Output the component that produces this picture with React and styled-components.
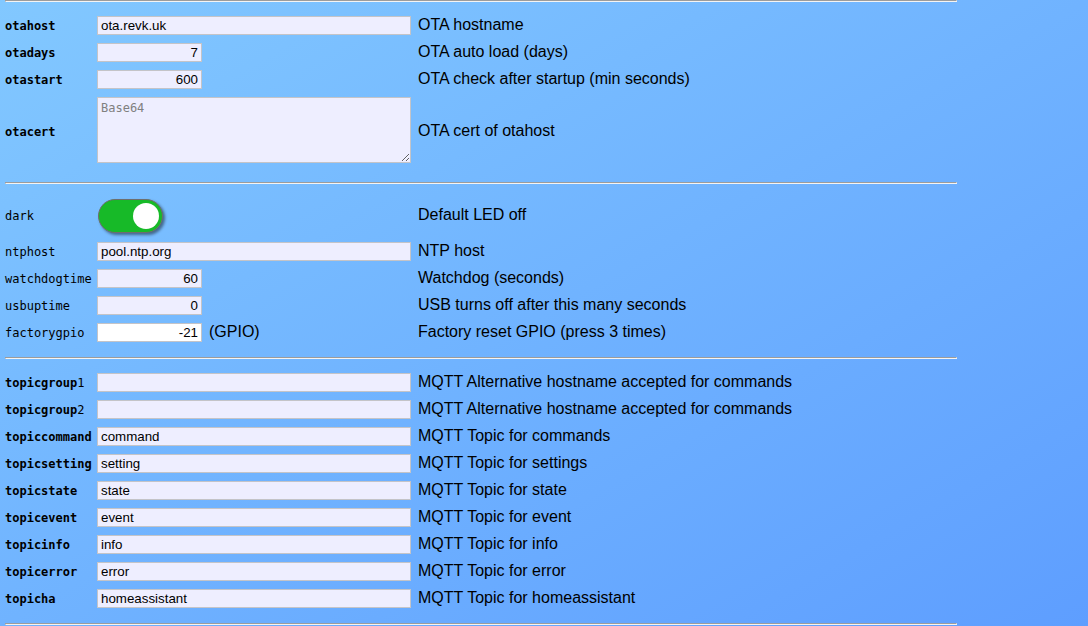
import React from "react";
import styled, { createGlobalStyle } from "styled-components";

const Global = createGlobalStyle`
  html, body { margin: 0; padding: 0; }
  body {
    min-height: 100vh;
    background: linear-gradient(to bottom right, #82c8ff, #5e9eff);
    background-attachment: fixed;
    font-family: "Liberation Sans", Arial, sans-serif;
    color: #000;
  }
`;

const Page = styled.div`
  width: 952px;
  margin-left: 5px;
`;

const Rule = styled.hr`
  margin: 0;
  height: 0;
  border-style: solid;
  border-width: 1px;
  border-color: #9c9c9c #f4f4f4 #f4f4f4 #9c9c9c;
`;

const Section = styled.div`
  display: flex;
  flex-direction: column;
  padding: 10px 0 11px;
`;

const Row = styled.div`
  display: grid;
  grid-template-columns: 92px 321px 1fr;
  align-items: center;
  min-height: ${(p) => p.$h || 27}px;
`;

const Label = styled.div`
  font-family: "DejaVu Sans Mono", "Liberation Mono", monospace;
  font-size: 12px;
  font-weight: ${(p) => (p.$bold ? 700 : 400)};
  white-space: nowrap;
`;

const Idx = styled.span`
  font-weight: 400;
`;

const Cell = styled.div`
  display: flex;
  align-items: center;
`;

const Input = styled.input`
  box-sizing: border-box;
  height: 19px;
  width: ${(p) => (p.$num ? 105 : 314)}px;
  margin: 0;
  padding: 0 3px;
  border: 1px solid #c4c4c8;
  background: ${(p) => (p.$white ? "#fff" : "#eeeeff")};
  font-family: "Liberation Sans", Arial, sans-serif;
  font-size: 13.33px;
  color: #000;
  text-align: ${(p) => (p.$num ? "right" : "left")};
  outline: none;
`;

const Area = styled.textarea`
  box-sizing: border-box;
  width: 314px;
  height: 66px;
  margin: 4px 0 8px;
  padding: 3px 3px;
  border: 1px solid #c4c4c8;
  background: #eeeeff;
  font-family: "DejaVu Sans Mono", "Liberation Mono", monospace;
  font-size: 12px;
  outline: none;
  &::placeholder { color: #808080; }
`;

const Unit = styled.span`
  font-size: 16px;
  margin-left: 7px;
  padding-bottom: 2px;
`;

const Desc = styled.div`
  font-size: 16px;
  white-space: nowrap;
  padding-bottom: 2px;
`;

const Switch = styled.span`
  position: relative;
  display: inline-block;
  box-sizing: border-box;
  width: 65px;
  height: 34px;
  margin-left: 1px;
  border-radius: 17px;
  background: #17ba28;
  border: 1px solid #6e6e6e;
  box-shadow: 2px 2px 3px rgba(0, 0, 0, 0.45);
  &::before {
    content: "";
    position: absolute;
    right: 3px;
    top: 3px;
    width: 26px;
    height: 26px;
    border-radius: 50%;
    background: #fff;
  }
`;

const sections = [
  [
    { name: "otahost", bold: true, kind: "text", value: "ota.revk.uk", desc: "OTA hostname" },
    { name: "otadays", bold: true, kind: "num", value: "7", desc: "OTA auto load (days)" },
    { name: "otastart", bold: true, kind: "num", value: "600", desc: "OTA check after startup (min seconds)" },
    { name: "otacert", bold: true, kind: "area", desc: "OTA cert of otahost" },
  ],
  [
    { name: "dark", kind: "switch", desc: "Default LED off" },
    { name: "ntphost", kind: "text", value: "pool.ntp.org", desc: "NTP host" },
    { name: "watchdogtime", kind: "num", value: "60", desc: "Watchdog (seconds)" },
    { name: "usbuptime", kind: "num", value: "0", desc: "USB turns off after this many seconds" },
    { name: "factorygpio", kind: "num", value: "-21", white: true, unit: "(GPIO)", desc: "Factory reset GPIO (press 3 times)" },
  ],
  [
    { name: "topicgroup", idx: "1", bold: true, kind: "text", value: "", desc: "MQTT Alternative hostname accepted for commands" },
    { name: "topicgroup", idx: "2", bold: true, kind: "text", value: "", desc: "MQTT Alternative hostname accepted for commands" },
    { name: "topiccommand", bold: true, kind: "text", value: "command", desc: "MQTT Topic for commands" },
    { name: "topicsetting", bold: true, kind: "text", value: "setting", desc: "MQTT Topic for settings" },
    { name: "topicstate", bold: true, kind: "text", value: "state", desc: "MQTT Topic for state" },
    { name: "topicevent", bold: true, kind: "text", value: "event", desc: "MQTT Topic for event" },
    { name: "topicinfo", bold: true, kind: "text", value: "info", desc: "MQTT Topic for info" },
    { name: "topicerror", bold: true, kind: "text", value: "error", desc: "MQTT Topic for error" },
    { name: "topicha", bold: true, kind: "text", value: "homeassistant", desc: "MQTT Topic for homeassistant" },
  ],
];

function Field({ f }) {
  if (f.kind === "area") return <Area placeholder="Base64" />;
  if (f.kind === "switch") return <Switch />;
  return (
    <>
      <Input defaultValue={f.value} $num={f.kind === "num"} $white={f.white} />
      {f.unit && <Unit>{f.unit}</Unit>}
    </>
  );
}

export default function App() {
  return (
    <>
      <Global />
      <Page>
        <Rule />
        {sections.map((sec, i) => (
          <React.Fragment key={i}>
            <Section>
              {sec.map((f, j) => (
                <Row key={j} $h={f.kind === "switch" ? 44 : 27}>
                  <Label $bold={f.bold}>
                    {f.name}
                    {f.idx && <Idx>{f.idx}</Idx>}
                  </Label>
                  <Cell>
                    <Field f={f} />
                  </Cell>
                  <Desc>{f.desc}</Desc>
                </Row>
              ))}
            </Section>
            <Rule />
          </React.Fragment>
        ))}
      </Page>
    </>
  );
}
